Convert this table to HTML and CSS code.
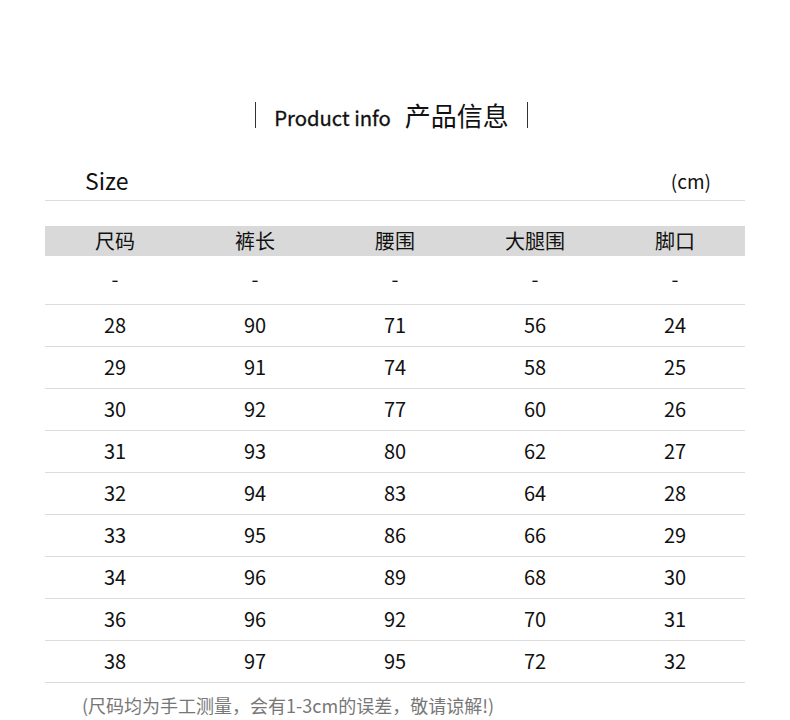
FILE: index.html
```html
<!DOCTYPE html>
<html lang="zh">
<head>
<meta charset="utf-8">
<link rel="stylesheet" href="styles.css">
</head>
<body>
<div class="page">
  <div class="title">
    <span class="bar"></span>
    <span class="en">Product info</span>
    <span class="cn">产品信息</span>
    <span class="bar"></span>
  </div>
  <div class="sizehead">
    <span class="size">Size</span>
    <span class="unit">(cm)</span>
  </div>
  <div class="table">
    <div class="row head"><span>尺码</span><span>裤长</span><span>腰围</span><span>大腿围</span><span>脚口</span></div>
    <div class="row dash"><span>-</span><span>-</span><span>-</span><span>-</span><span>-</span></div>
    <div class="row"><span>28</span><span>90</span><span>71</span><span>56</span><span>24</span></div>
    <div class="row"><span>29</span><span>91</span><span>74</span><span>58</span><span>25</span></div>
    <div class="row"><span>30</span><span>92</span><span>77</span><span>60</span><span>26</span></div>
    <div class="row"><span>31</span><span>93</span><span>80</span><span>62</span><span>27</span></div>
    <div class="row"><span>32</span><span>94</span><span>83</span><span>64</span><span>28</span></div>
    <div class="row"><span>33</span><span>95</span><span>86</span><span>66</span><span>29</span></div>
    <div class="row"><span>34</span><span>96</span><span>89</span><span>68</span><span>30</span></div>
    <div class="row"><span>36</span><span>96</span><span>92</span><span>70</span><span>31</span></div>
    <div class="row"><span>38</span><span>97</span><span>95</span><span>72</span><span>32</span></div>
  </div>
  <p class="note">(尺码均为手工测量，会有1-3cm的误差，敬请谅解!)</p>
</div>
</body>
</html>
```

FILE: styles.css
```css
html, body {
  margin: 0;
  padding: 0;
  background: #fff;
}
body {
  font-family: "Noto Sans CJK SC", "Noto Sans", sans-serif;
  color: #111;
}
.page {
  width: 790px;
  padding-top: 102px;
}
.title {
  display: flex;
  align-items: center;
  justify-content: center;
  height: 26px;
  padding-right: 7px;
}
.bar {
  width: 1px;
  height: 26px;
  background: #333;
}
.en {
  font-size: 20.3px;
  font-weight: 400;
  -webkit-text-stroke: 0.3px #111;
  margin-left: 18px;
  margin-right: 14px;
  line-height: 26px;
  padding-top: 4px;
  color: #111;
}
.cn {
  font-size: 26px;
  line-height: 26px;
  margin-right: 18px;
  color: #111;
}
.sizehead {
  margin: 38px 45px 0 45px;
  width: 700px;
  height: 35px;
  border-bottom: 1px solid #dcdcdc;
  display: flex;
  justify-content: space-between;
  align-items: center;
  box-sizing: border-box;
}
.size {
  font-size: 23px;
  margin-left: 40px;
  line-height: 30px;
  margin-top: -6px;
}
.unit {
  font-size: 19px;
  margin-right: 34px;
  line-height: 30px;
  margin-top: -4px;
}
.table {
  margin: 25px 45px 0 45px;
  width: 700px;
}
.row {
  display: grid;
  grid-template-columns: repeat(5, 140px);
  height: 42px;
  align-items: center;
  border-bottom: 1px solid #dcdcdc;
  box-sizing: border-box;
  font-size: 20px;
  padding-bottom: 2px;
}
.row span {
  text-align: center;
  line-height: 24px;
}
.row.head {
  height: 30px;
  background: #d9d9d9;
  border-bottom: none;
  font-size: 20px;
  padding-bottom: 0;
}
.row.dash {
  height: 49px;
  padding-bottom: 3px;
}
.note {
  margin: 10px 0 0 82px;
  font-size: 18px;
  color: #777;
  line-height: 24px;
}
```
